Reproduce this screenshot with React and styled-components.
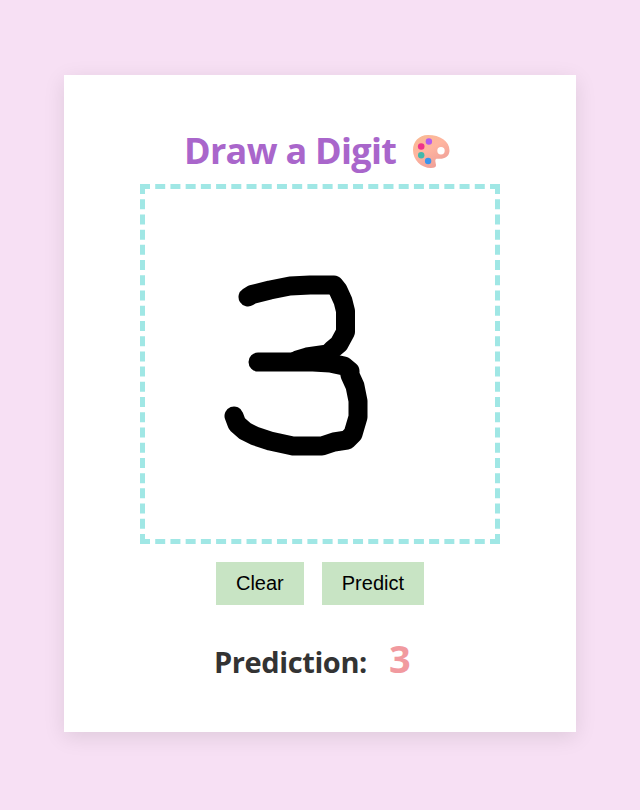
import React from "react";
import styled, { createGlobalStyle } from "styled-components";

const GlobalStyle = createGlobalStyle`
  * { box-sizing: border-box; }
  body {
    margin: 0;
    background: #f7e0f4;
    font-family: "Segoe UI", "Open Sans", "Noto Sans", sans-serif;
  }
`;

const Page = styled.main`
  height: 810px;
  padding-top: 75px;
  overflow: hidden;
`;

const Card = styled.section`
  width: 512px;
  height: 657px;
  margin: 0 auto;
  padding-top: 51px;
  display: flex;
  flex-direction: column;
  align-items: center;
  background: #fff;
  box-shadow: 0 5px 20px rgba(0, 0, 0, 0.1);
`;

const Title = styled.h1`
  display: flex;
  align-items: center;
  width: 270px;
  height: 50px;
  margin: 0 0 8px;
  color: #a966cb;
  font-size: 36px;
  font-weight: 700;
  line-height: 50px;
  white-space: nowrap;
`;

const TitleText = styled.span`
  width: 224px;
  margin-left: -1px;
  letter-spacing: -0.7px;
`;

const Palette = styled.svg`
  width: 40px;
  height: 36px;
  flex: none;
  margin: 1px 0 0 3px;
`;

const DrawingArea = styled.div`
  width: 360px;
  height: 360px;
  border: 5px dashed #a0e7e5;
`;

const Drawing = styled.svg`
  display: block;
  width: 350px;
  height: 350px;
`;

const Actions = styled.div`
  display: flex;
  gap: 18px;
  margin-top: 18px;
`;

const Button = styled.button`
  height: 43px;
  padding: 10px 20px;
  border: 0;
  color: #000;
  background: #c8e4c4;
  font: 20px "Liberation Sans", Arial, sans-serif;
`;

const Prediction = styled.div`
  display: flex;
  align-items: baseline;
  width: 210px;
  height: 60px;
  margin-top: 27px;
  line-height: 52px;
  color: #333;
  font-size: 29px;
  font-weight: 700;
  white-space: nowrap;
`;

const PredictionLabel = styled.span`
  width: 175px;
  margin-left: -1px;
  letter-spacing: -0.4px;
`;

const Result = styled.span`
  color: #f19a9f;
  font-size: 38px;
`;

function PaletteIcon() {
  return (
    <Palette viewBox="0 0 40 36" aria-hidden="true">
      <defs>
        <linearGradient id="wood" x1="0" y1="0" x2="0.6" y2="1">
          <stop stopColor="#f8ba91" />
          <stop offset=".5" stopColor="#ffb5a0" />
          <stop offset="1" stopColor="#ef9f98" />
        </linearGradient>
      </defs>
      <path fill="url(#wood)" fillRule="evenodd" d="M17 1C7.500 1 2 8 2 16c0 10 8 18 18 18 3.600 0 5.300-1 5-3.200-.2-2.200-1.700-5.400.7-6 1.300-.3 3.100.3 5.100-.1C35.500 24 38.500 21 38.500 16.500 38.500 7 29 1 17 1Zm13 12a3.700 3.700 0 1 1 0 7.400 3.700 3.700 0 0 1 0-7.400Z" />
      <circle cx="17.900" cy="7.500" r="3.200" fill="#b35aef" />
      <circle cx="10.200" cy="12.500" r="3.300" fill="#ef328b" />
      <circle cx="10.200" cy="21.200" r="3.200" fill="#42b8ac" />
      <circle cx="17.100" cy="27" r="3.200" fill="#3a94ed" />
    </Palette>
  );
}

export default function App() {
  return (
    <>
      <GlobalStyle />
      <Page>
        <Card>
          <Title>
            <TitleText>Draw a Digit</TitleText>
            <PaletteIcon />
          </Title>
          <DrawingArea>
            <Drawing viewBox="145 189 350 350" role="img" aria-label="Handwritten three">
              <g fill="none" stroke="#000" strokeWidth="19" strokeLinecap="round" strokeLinejoin="round">
                <path d="M248 297L252 294.500L270 290L290 286L310 285L334 285L338 290L343 301L345.500 311L345.500 332L339 344L333 349L328 354L307 357L297 360" />
                <path d="M258 362L313 362L330 363L344 366L350 371L350 375L355 386L358 401L358 417L353 434L347 440L334 442L322 446L293 446L270 441L255 436L245 431L237 424L234 416" />
              </g>
            </Drawing>
          </DrawingArea>
          <Actions>
            <Button>Clear</Button>
            <Button>Predict</Button>
          </Actions>
          <Prediction>
            <PredictionLabel>Prediction:</PredictionLabel>
            <Result>3</Result>
          </Prediction>
        </Card>
      </Page>
    </>
  );
}
